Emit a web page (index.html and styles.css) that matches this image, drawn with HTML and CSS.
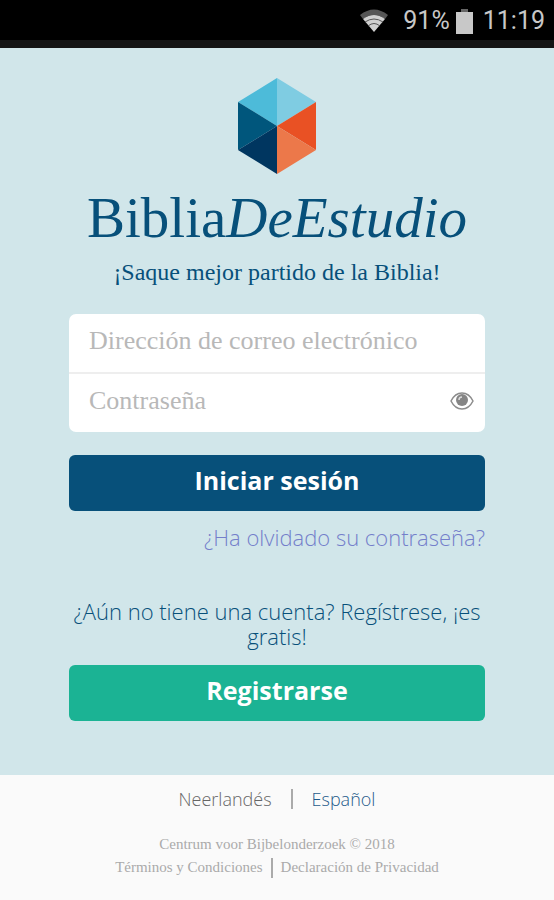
FILE: index.html
```html
<!DOCTYPE html>
<html lang="es">

<head>
    <meta charset="UTF-8">
    <meta name="viewport" content="width=device-width, initial-scale=1.0">
    <title>BibliaDeEstudio</title>
    <link rel="stylesheet" href="styles.css">
</head>

<body>
    <div class="status">
        <svg class="wifi" viewBox="0 0 30 24" width="30" height="24">
            <path d="M1 6 Q15 -5 29 6 L26 10 Q15 2 4 10 Z" fill="#555" />
            <path d="M4 10 Q15 2 26 10 L15 23 Z" fill="#d0d0d0" />
            <path d="M6 13 Q15 7 24 13 M9 17 Q15 12 21 17" fill="none" stroke="#555" stroke-width="1" />
        </svg>
        <span>91%</span>
        <svg class="battery" viewBox="0 0 17 25" width="17" height="25">
            <path d="M5 0h7v3H5z" fill="#666" />
            <path d="M0 3h17v22H0z" fill="#c8c8c8" />
        </svg>
        <span>11:19</span>
    </div>

    <main class="main">
        <svg class="logo" viewBox="0 0 78 96" width="78" height="96">
            <path d="M39 0L0 24L39 48Z" fill="#4dbbd9" />
            <path d="M39 0L78 24L39 48Z" fill="#7fcce2" />
            <path d="M0 24L39 48L0 72Z" fill="#00567c" />
            <path d="M0 72L39 48V96Z" fill="#003660" />
            <path d="M78 24L39 48L78 72Z" fill="#e95124" />
            <path d="M78 72L39 48V96Z" fill="#ec784a" />
        </svg>
        <h1 class="title">Biblia<em>DeEstudio</em></h1>
        <p class="slogan">¡Saque mejor partido de la Biblia!</p>

        <form class="login">
            <div class="fields">
                <input type="email" class="email" aria-label="Dirección de correo electrónico" placeholder="Dirección de correo electrónico">
                <div class="password">
                    <input type="password" aria-label="Contraseña" placeholder="Contraseña">
                    <button type="button" class="eye" aria-label="Mostrar contraseña">
                        <svg viewBox="0 0 24 18" width="24" height="18">
                            <path d="M1 9Q5 1 12 1T23 9Q19 17 12 17T1 9Z" fill="none" stroke="#8c8c8c" stroke-width="1.5" />
                            <circle cx="12" cy="8" r="6" fill="#858585" />
                            <path d="M9 8Q9 5 12 5" fill="none" stroke="#ddd" stroke-width="1.5" />
                        </svg>
                    </button>
                </div>
            </div>
            <button type="submit" class="btn">Iniciar sesión</button>
            <a href="#" class="forgot">¿Ha olvidado su contraseña?</a>
        </form>

        <p class="account">¿Aún no tiene una cuenta? Regístrese, ¡es gratis!</p>
        <button type="button" class="btn register">Registrarse</button>
    </main>

    <footer class="footer">
        <div class="langs">
            <a href="#">Neerlandés</a>
            <i></i>
            <a href="#" class="active">Español</a>
        </div>
        <p>Centrum voor Bijbelonderzoek © 2018</p>
        <div class="links">
            <a href="#">Términos y Condiciones</a>
            <i></i>
            <a href="#">Declaración de Privacidad</a>
        </div>
    </footer>
</body>

</html>
```
FILE: styles.css
```css
* {
    box-sizing: border-box;
}

body,
h1,
p {
    margin: 0;
    padding: 0;
    font-weight: normal;
}

body {
    min-height: 100vh;
    display: flex;
    flex-direction: column;
    background: #fafafa;
    font-family: "Open Sans", "Noto Sans", sans-serif;
}

a {
    text-decoration: none;
}

input,
button {
    border: 0;
    padding: 0;
    background: none;
    font-family: inherit;
}

/* status bar */
.status {
    height: 48px;
    padding: 0 9px 6px 0;
    display: flex;
    justify-content: flex-end;
    align-items: center;
    background: linear-gradient(#000 40px, #151515 40px);
    color: #c8c8c8;
    font: 25px/40px Roboto, sans-serif;
}

.wifi {
    margin-right: 14px;
}

.battery {
    margin: 0 10px 0 6px;
}

/* login */
.main {
    padding: 30px 69px 54px;
    display: flex;
    flex-direction: column;
    background: #d1e6ea;
    color: #07507a;
}

.logo {
    align-self: center;
}

.title,
.slogan {
    font-family: "Liberation Serif", serif;
    text-align: center;
    white-space: nowrap;
}

.title {
    margin-top: 12px;
    font-size: 57px;
    line-height: 64px;
}

.slogan {
    margin-top: 8px;
    font-size: 24px;
    line-height: 28px;
}

.login {
    margin-top: 28px;
    display: flex;
    flex-direction: column;
}

.fields {
    border-radius: 7px;
    background: #fff;
}

.fields input {
    width: 100%;
    height: 58px;
    padding: 0 20px 4px;
    color: #555;
    font-family: "Liberation Serif", serif;
    font-size: 26px;
}

.fields input::placeholder {
    color: #b8b8b8;
}

.email {
    display: block;
}

.password {
    display: flex;
    align-items: center;
    border-top: 2px solid #eee;
}

.eye {
    margin: 0 11px 4px 0;
    display: flex;
    cursor: pointer;
}

.btn {
    width: 100%;
    height: 56px;
    padding-bottom: 6px;
    border-radius: 6px;
    background: #07507a;
    color: #fff;
    font-size: 25px;
    font-weight: bold;
    cursor: pointer;
}

.login .btn {
    margin-top: 23px;
}

.forgot {
    margin-top: 12px;
    align-self: flex-end;
    color: #747fcb;
    font-size: 22px;
    font-weight: 300;
    line-height: 28px;
}

.account {
    margin-top: 48px;
    font-size: 22px;
    font-weight: 300;
    line-height: 25px;
    text-align: center;
}

.register {
    margin-top: 16px;
    background: #1bb394;
}

/* footer */
.footer {
    padding: 10px 0 16px;
    text-align: center;
    color: #aaa;
    font: 15px/23px "Liberation Serif", serif;
}

.footer a {
    color: inherit;
}

.langs,
.links {
    display: flex;
    justify-content: center;
    align-items: center;
}

.langs {
    margin-bottom: 20px;
    gap: 19px;
    color: #666;
    font: 300 18px/28px "Open Sans", sans-serif;
}

.langs .active {
    color: #1f5a8a;
}

.links {
    gap: 8px;
}

.footer i {
    width: 2px;
    height: 20px;
    background: #aaa;
}
```
